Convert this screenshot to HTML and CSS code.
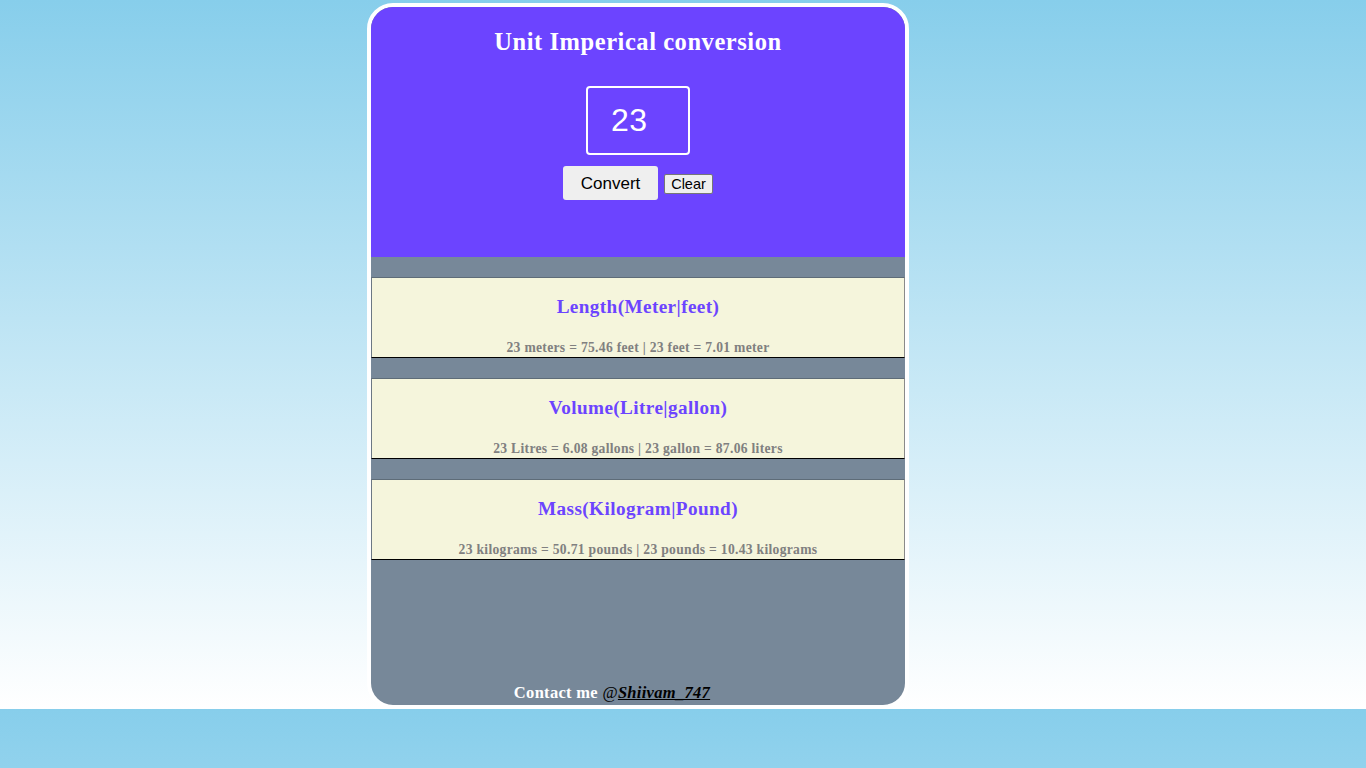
FILE: index.html
```html
<!DOCTYPE html>
<html lang="en">
<head>
<meta charset="utf-8">
<title>Unit Imperical conversion</title>
<link rel="stylesheet" href="styles.css">
</head>
<body>
<main class="card">
  <header class="head">
    <h2 class="title">Unit Imperical conversion</h2>
    <div class="inputbox">23</div>
    <div class="buttons">
      <button class="convert">Convert</button>
      <button class="clear">Clear</button>
    </div>
  </header>
  <section class="results">
    <div class="box">
      <h3 class="box-title">Length(Meter|feet)</h3>
      <p class="box-text">23 meters = 75.46 feet | 23 feet = 7.01 meter</p>
    </div>
    <div class="box">
      <h3 class="box-title">Volume(Litre|gallon)</h3>
      <p class="box-text">23 Litres = 6.08 gallons | 23 gallon = 87.06 liters</p>
    </div>
    <div class="box">
      <h3 class="box-title">Mass(Kilogram|Pound)</h3>
      <p class="box-text">23 kilograms = 50.71 pounds | 23 pounds = 10.43 kilograms</p>
    </div>
  </section>
  <footer class="foot">
    <span class="contact">Contact me <span class="at">@</span><a class="handle" href="#">Shiivam_747</a></span>
  </footer>
</main>
</body>
</html>
```

FILE: styles.css
```css
html {
  background: linear-gradient(#87ceeb, #ffffff) 0 0 / 100% 709px repeat;
}
body {
  margin: 0;
  padding-top: 3px;
  font-family: "Liberation Serif", "Times New Roman", serif;
}
.card {
  width: 534px;
  height: 698px;
  margin-left: 367px;
  border: 4px solid #ffffff;
  border-radius: 26px;
  overflow: hidden;
  background: #778899;
  display: flex;
  flex-direction: column;
}
.head {
  height: 250px;
  background: #6c44ff;
  display: flex;
  flex-direction: column;
  align-items: center;
  padding-top: 21px;
  box-sizing: border-box;
}
.title {
  margin: 0;
  font-size: 24.5px;
  line-height: 28px;
  letter-spacing: 0.55px;
  font-weight: bold;
  color: #ffffff;
}
.inputbox {
  margin-top: 30px;
  width: 104px;
  height: 69px;
  box-sizing: border-box;
  border: 2px solid #ffffff;
  border-radius: 4px;
  padding-left: 23px;
  display: flex;
  align-items: center;
  font-family: "Liberation Sans", Arial, sans-serif;
  font-size: 32px;
  letter-spacing: 0.5px;
  color: #ffffff;
}
.buttons {
  margin-top: 11px;
  display: flex;
  align-items: center;
  gap: 6px;
}
.convert {
  width: 95px;
  height: 34px;
  border: none;
  border-radius: 3px;
  background: #efefef;
  font-family: "Liberation Sans", Arial, sans-serif;
  font-size: 17px;
  color: #000;
  padding: 2px 0 0;
}
.clear {
  width: 49px;
  height: 20px;
  border: 1px solid #767676;
  border-radius: 2px;
  background: #efefef;
  font-family: "Liberation Sans", Arial, sans-serif;
  font-size: 14.5px;
  color: #000;
  padding: 0;
  margin-top: 2px;
}
.results {
  display: flex;
  flex-direction: column;
  gap: 20px;
  padding-top: 20px;
}
.box {
  height: 79px;
  background: #f5f5dc;
  border-top: 1px solid #5e6c78;
  border-left: 1px solid #6c7884;
  border-right: 1px solid #8a8a8a;
  border-bottom: 1px solid #000000;
  display: flex;
  flex-direction: column;
  align-items: center;
}
.box-title {
  margin: 18px 0 0;
  font-size: 19.2px;
  line-height: 22px;
  letter-spacing: 0.4px;
  font-weight: bold;
  color: #6c44ff;
}
.box-text {
  margin: 22px 0 0;
  font-size: 13.6px;
  line-height: 15px;
  letter-spacing: 0.3px;
  font-weight: bold;
  color: #808080;
}
.foot {
  margin-top: auto;
  padding-right: 52px;
  padding-bottom: 3px;
  text-align: center;
  font-size: 16.5px;
  line-height: 18px;
  letter-spacing: 0.3px;
  font-weight: bold;
}
.contact {
  color: #ffffff;
}
.at {
  color: #000000;
  font-weight: normal;
}
.handle {
  color: #000000;
  font-style: italic;
  text-decoration: underline;
}
```
